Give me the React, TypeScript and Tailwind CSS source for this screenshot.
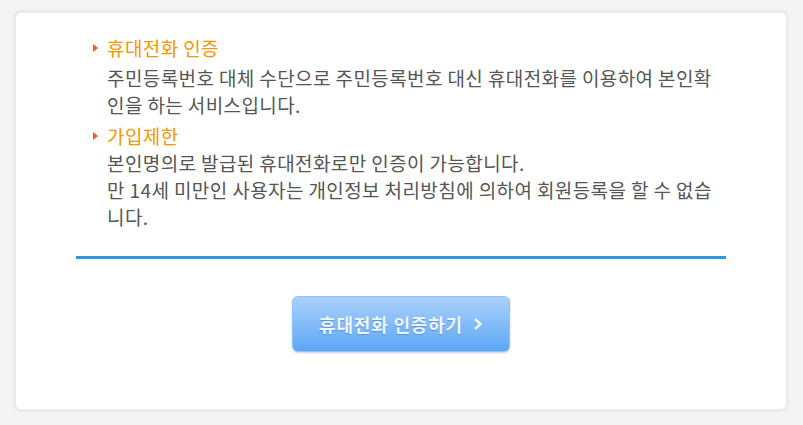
const FONT = { fontFamily: '"Noto Sans CJK KR", "Noto Sans", sans-serif' };

function Bullet() {
  return (
    <svg width="5" height="8" viewBox="0 0 5 8" className="shrink-0">
      <path d="M0 0 L5 4 L0 8 Z" fill="#f65a28" />
    </svg>
  );
}

function Section({
  title,
  lines,
  className = "",
  bodyClass = "",
}: {
  title: string;
  lines: string[];
  className?: string;
  bodyClass?: string;
}) {
  return (
    <li className={className}>
      <div className="-ml-[14px] flex items-center gap-[9px] text-[#f39800]">
        <Bullet />
        <span>{title}</span>
      </div>
      <div className={bodyClass}>
        {lines.map((l) => (
          <p key={l} className="whitespace-nowrap text-[#555555]">
            {l}
          </p>
        ))}
      </div>
    </li>
  );
}

export default function App() {
  return (
    <div className="h-[425px] w-[803px] bg-[#f4f4f4] pl-[13px] pt-[10px]" style={FONT}>
      <div className="h-[402px] w-[776px] rounded-[8px] border-[3px] border-[#ebebeb] bg-white px-[60px] pt-[21px]">
        <ul className="pl-[31px] text-[19px] leading-[27px] tracking-[0.4px]">
          <Section
            title="휴대전화 인증"
            bodyClass="mt-[3px]"
            lines={["주민등록번호 대체 수단으로 주민등록번호 대신 휴대전화를 이용하여 본인확", "인을 하는 서비스입니다."]}
          />
          <Section
            className="mt-[4px]"
            title="가입제한"
            lines={[
              "본인명의로 발급된 휴대전화로만 인증이 가능합니다.",
              "만 14세 미만인 사용자는 개인정보 처리방침에 의하여 회원등록을 할 수 없습",
              "니다.",
            ]}
          />
        </ul>

        <div className="mt-[26px] h-[3px] bg-[#2a98e6]" />

        <div className="mt-[37px] flex justify-center">
          <button className="flex h-[56px] w-[218px] items-center justify-center gap-[10px] rounded-[6px] border border-[#8fc2f7] bg-gradient-to-b from-[#aad2fc] via-[#84bcf8] to-[#5ca6f4] text-[18px] font-bold tracking-[0.8px] text-[#eef6ff] shadow-[0_1px_2px_rgba(80,130,200,0.35)] [text-shadow:0_1px_1px_rgba(40,100,180,0.45)]">
            <span>휴대전화 인증하기</span>
            <svg width="10" height="14" viewBox="0 0 10 14">
              <path d="M2 2 L7.5 7 L2 12" stroke="#eef6ff" strokeWidth="2.4" fill="none" />
            </svg>
          </button>
        </div>
      </div>
    </div>
  );
}
